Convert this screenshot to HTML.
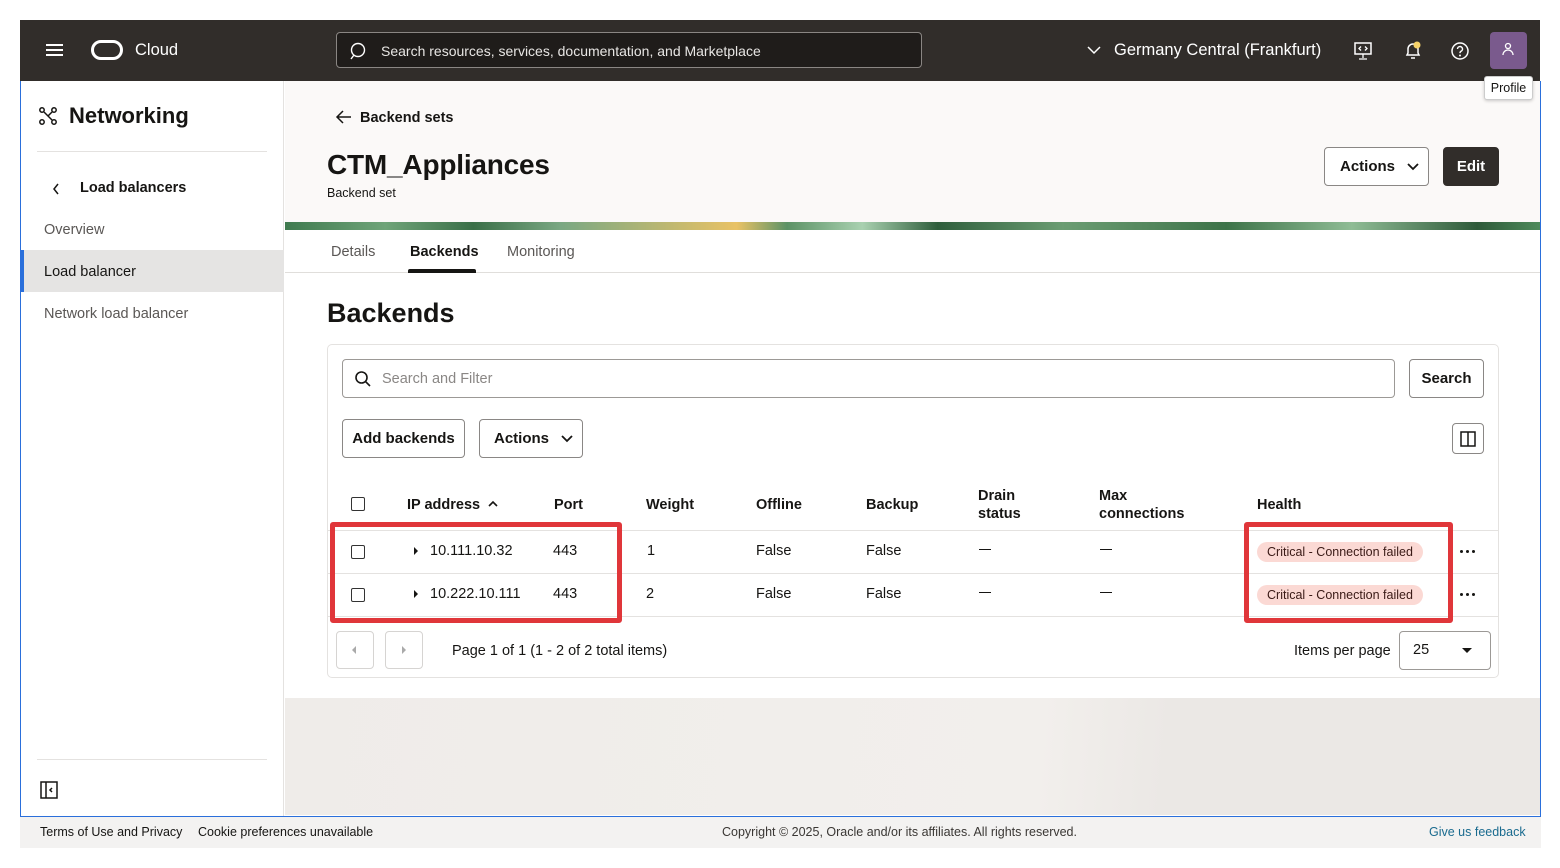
<!DOCTYPE html>
<html><head><meta charset="utf-8"><style>
*{box-sizing:border-box;margin:0;padding:0}
body{width:1560px;height:868px;background:#fff;font-family:"Liberation Sans",sans-serif;color:#161513;position:relative;overflow:hidden}
.abs{position:absolute}
.top{left:20px;top:20px;width:1520px;height:61px;background:#312d2a}
.frame{left:20px;top:81px;width:1521px;height:736px;border:1px solid #2a6fdb;border-top:none;background:#fff}
.side{left:21px;top:81px;width:263px;height:735px;background:#fff;border-right:1px solid #e4e2e0}
.t{position:absolute;white-space:nowrap}
.btn{position:absolute;border:1px solid #8a8785;border-radius:4px;background:#fff;font-size:15px;font-weight:bold;display:flex;align-items:center;justify-content:center}
.th{position:absolute;font-size:14.5px;font-weight:bold;line-height:18px}
.td{position:absolute;font-size:14.5px}
.cb{position:absolute;width:14px;height:14px;border:1.5px solid #333;border-radius:2px;background:#fff}
.badge{position:absolute;background:#fbd9d4;border-radius:11px;font-size:12.5px;padding:3px 10px;color:#3a1a16}
.red{position:absolute;border:5px solid #e0363a;border-radius:3px}
.dots{position:absolute;width:16px;height:4px}
.dots i{position:absolute;top:0;width:3px;height:3px;border-radius:50%;background:#161513}
</style></head><body>
<div class="abs top">
  <div class="abs" style="left:26px;top:24px;width:17px;height:2px;background:#fff;box-shadow:0 5px 0 #fff,0 10px 0 #fff"></div>
  <div class="abs" style="left:71px;top:20px;width:32px;height:20px;border:3px solid #fff;border-radius:10px"></div>
  <div class="t" style="left:115px;top:21px;color:#fff;font-size:16.5px">Cloud</div>
  <div class="abs" style="left:316px;top:12px;width:586px;height:36px;border:1px solid #8a8683;border-radius:4px;background:#1f1c1a"></div>
  <svg class="abs" style="left:328px;top:22px" width="20" height="20" viewBox="0 0 20 20"><circle cx="10" cy="8" r="6.5" fill="none" stroke="#fff" stroke-width="1.4"/><path d="M6 13 L3 17" stroke="#fff" stroke-width="1.4"/></svg>
  <div class="t" style="left:361px;top:23px;color:#e8e6e4;font-size:14px">Search resources, services, documentation, and Marketplace</div>
  <svg class="abs" style="left:1066px;top:24px" width="16" height="12"><path d="M2 3 L8 9 L14 3" fill="none" stroke="#fff" stroke-width="1.5"/></svg>
  <div class="t" style="left:1094px;top:21px;color:#fff;font-size:16.5px">Germany Central (Frankfurt)</div>
  <svg class="abs" style="left:1333px;top:21px" width="20" height="20"><rect x="2" y="2" width="16" height="11" fill="none" stroke="#fff" stroke-width="1.5"/><path d="M10 13v4M6 18h8M8 5.5 6 7.5 8 9.5M12 5.5 14 7.5 12 9.5" fill="none" stroke="#fff" stroke-width="1.3"/></svg>
  <svg class="abs" style="left:1383px;top:20px" width="20" height="22"><path d="M4 15 L5 13 V9 a5 5 0 0 1 10 0 V13 L16 15 Z M8 18 h4" fill="none" stroke="#fff" stroke-width="1.5"/><circle cx="14" cy="5" r="3.5" fill="#f7d36a"/></svg>
  <svg class="abs" style="left:1430px;top:21px" width="20" height="20"><circle cx="10" cy="10" r="8" fill="none" stroke="#fff" stroke-width="1.5"/><path d="M7.5 8a2.5 2.5 0 1 1 3.5 2.3c-.8.4-1 1-1 1.8" fill="none" stroke="#fff" stroke-width="1.4"/><circle cx="10" cy="14.5" r="1" fill="#fff"/></svg>
  <div class="abs" style="left:1470px;top:12px;width:37px;height:37px;border-radius:4px;background:#7a5a8d"></div>
  <svg class="abs" style="left:1478px;top:20px" width="22" height="22"><circle cx="10" cy="6" r="2.5" fill="none" stroke="#fff" stroke-width="1.3"/><path d="M5 15 a5 5 0 0 1 10 0" fill="none" stroke="#fff" stroke-width="1.3"/></svg>
</div>
<div class="abs frame"></div>
<div class="abs" style="left:285px;top:81px;width:1255px;height:141px;background:#fbf9f8"></div>
<div class="abs" style="left:285px;top:222px;width:1255px;height:8px;background:linear-gradient(90deg,#3f7a4f 0,#6fa479 8%,#3a6f48 15%,#7aa883 22%,#e9c265 36%,#5c9266 40%,#a9d1b0 46%,#2f5e3c 52%,#6b9d73 62%,#3d7349 75%,#8fbc95 85%,#2e5a3a 95%,#4e8a5b 100%)"></div>
<div class="abs" style="left:285px;top:272px;width:1255px;height:1px;background:#e0dedb"></div>
<div class="abs" style="left:285px;top:698px;width:1255px;height:117px;background:linear-gradient(95deg,#efece9 0,#f2efec 60%,#ebe8e5 70%,#ebe8e5 100%)"></div>
<div class="abs side"></div>
<div class="abs" style="left:21px;top:250px;width:263px;height:42px;background:#e5e4e3;border-left:3px solid #2a6fdb"></div>
<svg class="abs" style="left:38px;top:106px" width="20" height="20"><circle cx="4" cy="4" r="2.2" fill="none" stroke="#161513" stroke-width="1.5"/><circle cx="16" cy="4" r="2.2" fill="none" stroke="#161513" stroke-width="1.5"/><circle cx="4" cy="16" r="2.2" fill="none" stroke="#161513" stroke-width="1.5"/><circle cx="16" cy="16" r="2.2" fill="none" stroke="#161513" stroke-width="1.5"/><path d="M6 6 L14 14 M14 6 L10 10" stroke="#161513" stroke-width="1.5"/></svg>
<div class="t" style="left:69px;top:103px;font-size:22px;font-weight:bold">Networking</div>
<div class="abs" style="left:37px;top:151px;width:230px;height:1px;background:#e4e2e0"></div>
<svg class="abs" style="left:51px;top:182px" width="10" height="14"><path d="M7 2 L3 7 L7 12" fill="none" stroke="#161513" stroke-width="1.5"/></svg>
<div class="t" style="left:80px;top:180px;font-size:14.5px;font-weight:bold">Load balancers</div>
<div class="t" style="left:44px;top:222px;font-size:14.5px;color:#5a5755">Overview</div>
<div class="t" style="left:44px;top:264px;font-size:14.5px;color:#161513">Load balancer</div>
<div class="t" style="left:44px;top:306px;font-size:14.5px;color:#5a5755">Network load balancer</div>
<div class="abs" style="left:37px;top:759px;width:230px;height:1px;background:#e4e2e0"></div>
<svg class="abs" style="left:40px;top:781px" width="20" height="19"><rect x="1" y="1" width="16" height="16" fill="none" stroke="#161513" stroke-width="1.5"/><path d="M6 1v16M12 7 L10 9 L12 11" fill="none" stroke="#161513" stroke-width="1.5"/></svg>

<svg class="abs" style="left:335px;top:109px" width="18" height="16"><path d="M16 8 H2 M8 2 L2 8 L8 14" fill="none" stroke="#161513" stroke-width="1.5"/></svg>
<div class="t" style="left:360px;top:110px;font-size:14.5px;font-weight:bold">Backend sets</div>
<div class="t" style="left:327px;top:149px;font-size:28px;font-weight:bold;letter-spacing:-0.2px">CTM_Appliances</div>
<div class="t" style="left:327px;top:186px;font-size:12.5px">Backend set</div>
<div class="btn" style="left:1324px;top:147px;width:105px;height:39px;justify-content:flex-start;padding-left:15px">Actions<svg style="margin-left:12px" width="12" height="8"><path d="M1 1 L6 6 L11 1" fill="none" stroke="#161513" stroke-width="1.8"/></svg></div>
<div class="btn" style="left:1443px;top:147px;width:56px;height:39px;background:#312d2a;color:#fff;border-color:#312d2a">Edit</div>
<div class="t" style="left:331px;top:244px;font-size:14.5px;color:#5a5755">Details</div>
<div class="t" style="left:410px;top:244px;font-size:14.5px;font-weight:bold">Backends</div>
<div class="abs" style="left:408px;top:269px;width:68px;height:4px;background:#161513;border-radius:2px 2px 0 0"></div>
<div class="t" style="left:507px;top:244px;font-size:14.5px;color:#5a5755">Monitoring</div>
<div class="t" style="left:327px;top:298px;font-size:27px;font-weight:bold">Backends</div>

<div class="abs" style="left:327px;top:344px;width:1172px;height:334px;border:1px solid #e4e2e0;border-radius:5px;background:#fff"></div>
<div class="abs" style="left:342px;top:359px;width:1053px;height:39px;border:1px solid #9c9996;border-radius:4px"></div>
<svg class="abs" style="left:354px;top:370px" width="18" height="18"><circle cx="7.5" cy="7.5" r="5.5" fill="none" stroke="#161513" stroke-width="1.6"/><path d="M11.5 11.5 L16 16" stroke="#161513" stroke-width="1.6"/></svg>
<div class="t" style="left:382px;top:371px;font-size:14.5px;color:#8a8785">Search and Filter</div>
<div class="btn" style="left:1409px;top:359px;width:75px;height:39px">Search</div>
<div class="btn" style="left:342px;top:419px;width:123px;height:39px">Add backends</div>
<div class="btn" style="left:479px;top:419px;width:104px;height:39px;justify-content:flex-start;padding-left:14px">Actions<svg style="margin-left:12px" width="12" height="8"><path d="M1 1 L6 6 L11 1" fill="none" stroke="#161513" stroke-width="1.8"/></svg></div>
<div class="btn" style="left:1452px;top:423px;width:32px;height:31px"><svg width="16" height="16"><rect x="1" y="1" width="14" height="14" fill="none" stroke="#161513" stroke-width="1.5"/><path d="M8 1v14" stroke="#161513" stroke-width="1.5"/></svg></div>

<div class="cb" style="left:351px;top:497px"></div>
<div class="th" style="left:407px;top:496px">IP address</div>
<svg class="abs" style="left:487px;top:499px" width="12" height="9"><path d="M2 7 L6 3 L10 7" fill="none" stroke="#161513" stroke-width="1.6"/></svg>
<div class="th" style="left:554px;top:496px">Port</div>
<div class="th" style="left:646px;top:496px">Weight</div>
<div class="th" style="left:756px;top:496px">Offline</div>
<div class="th" style="left:866px;top:496px">Backup</div>
<div class="th" style="left:978px;top:487px">Drain<br>status</div>
<div class="th" style="left:1099px;top:487px">Max<br>connections</div>
<div class="th" style="left:1257px;top:496px">Health</div>
<div class="abs" style="left:328px;top:530px;width:1170px;height:1px;background:#e4e2e0"></div>
<div class="abs" style="left:328px;top:573px;width:1170px;height:1px;background:#e4e2e0"></div>
<div class="abs" style="left:328px;top:616px;width:1170px;height:1px;background:#e4e2e0"></div>

<div class="cb" style="left:351px;top:545px"></div>
<div class="cb" style="left:351px;top:588px"></div>
<svg class="abs" style="left:413px;top:546px" width="6" height="10"><path d="M1 1 L5 5 L1 9Z" fill="#161513"/></svg>
<svg class="abs" style="left:413px;top:589px" width="6" height="10"><path d="M1 1 L5 5 L1 9Z" fill="#161513"/></svg>
<div class="td" style="left:430px;top:543px">10.111.10.32</div>
<div class="td" style="left:430px;top:586px">10.222.10.111</div>
<div class="td" style="left:553px;top:543px">443</div><div class="td" style="left:553px;top:586px">443</div>
<div class="td" style="left:647px;top:543px">1</div><div class="td" style="left:646px;top:586px">2</div>
<div class="td" style="left:756px;top:543px">False</div><div class="td" style="left:756px;top:586px">False</div>
<div class="td" style="left:866px;top:543px">False</div><div class="td" style="left:866px;top:586px">False</div>
<div class="abs" style="left:979px;top:549px;width:12px;height:1px;background:#161513"></div>
<div class="abs" style="left:979px;top:592px;width:12px;height:1px;background:#161513"></div>
<div class="abs" style="left:1100px;top:549px;width:12px;height:1px;background:#161513"></div>
<div class="abs" style="left:1100px;top:592px;width:12px;height:1px;background:#161513"></div>
<div class="badge" style="left:1257px;top:542px">Critical - Connection failed</div>
<div class="badge" style="left:1257px;top:585px">Critical - Connection failed</div>
<div class="dots" style="left:1460px;top:550px"><i style="left:0"></i><i style="left:6px"></i><i style="left:12px"></i></div>
<div class="dots" style="left:1460px;top:593px"><i style="left:0"></i><i style="left:6px"></i><i style="left:12px"></i></div>
<div class="red" style="left:330px;top:522px;width:292px;height:101px"></div>
<div class="red" style="left:1244px;top:522px;width:209px;height:101px"></div>

<div class="abs" style="left:336px;top:631px;width:38px;height:38px;border:1px solid #d6d4d2;border-radius:4px"></div>
<div class="abs" style="left:385px;top:631px;width:38px;height:38px;border:1px solid #d6d4d2;border-radius:4px"></div>
<svg class="abs" style="left:351px;top:645px" width="6" height="10"><path d="M5 1 L1 5 L5 9Z" fill="#aaa"/></svg>
<svg class="abs" style="left:401px;top:645px" width="6" height="10"><path d="M1 1 L5 5 L1 9Z" fill="#aaa"/></svg>
<div class="td" style="left:452px;top:643px">Page 1 of 1 (1 - 2 of 2 total items)</div>
<div class="td" style="left:1294px;top:643px">Items per page</div>
<div class="abs" style="left:1399px;top:631px;width:92px;height:39px;border:1px solid #9c9996;border-radius:4px"></div>
<div class="td" style="left:1413px;top:642px">25</div>
<svg class="abs" style="left:1461px;top:647px" width="12" height="7"><path d="M1 1 L6 6 L11 1Z" fill="#161513"/></svg>

<div class="abs" style="left:1484px;top:76px;width:49px;height:24px;background:#fff;border:1px solid #ccc;border-radius:3px;box-shadow:0 1px 3px rgba(0,0,0,.2);font-size:12.5px;display:flex;align-items:center;justify-content:center">Profile</div>

<div class="abs" style="left:20px;top:817px;width:1521px;height:31px;background:#f3f2f1"></div>
<div class="t" style="left:40px;top:825px;font-size:12.5px">Terms of Use and Privacy</div>
<div class="t" style="left:198px;top:825px;font-size:12.5px">Cookie preferences unavailable</div>
<div class="t" style="left:722px;top:825px;font-size:12.5px;color:#3a3734">Copyright © 2025, Oracle and/or its affiliates. All rights reserved.</div>
<div class="t" style="left:1429px;top:825px;font-size:12.5px;color:#1a6b8f">Give us feedback</div>
</body></html>
